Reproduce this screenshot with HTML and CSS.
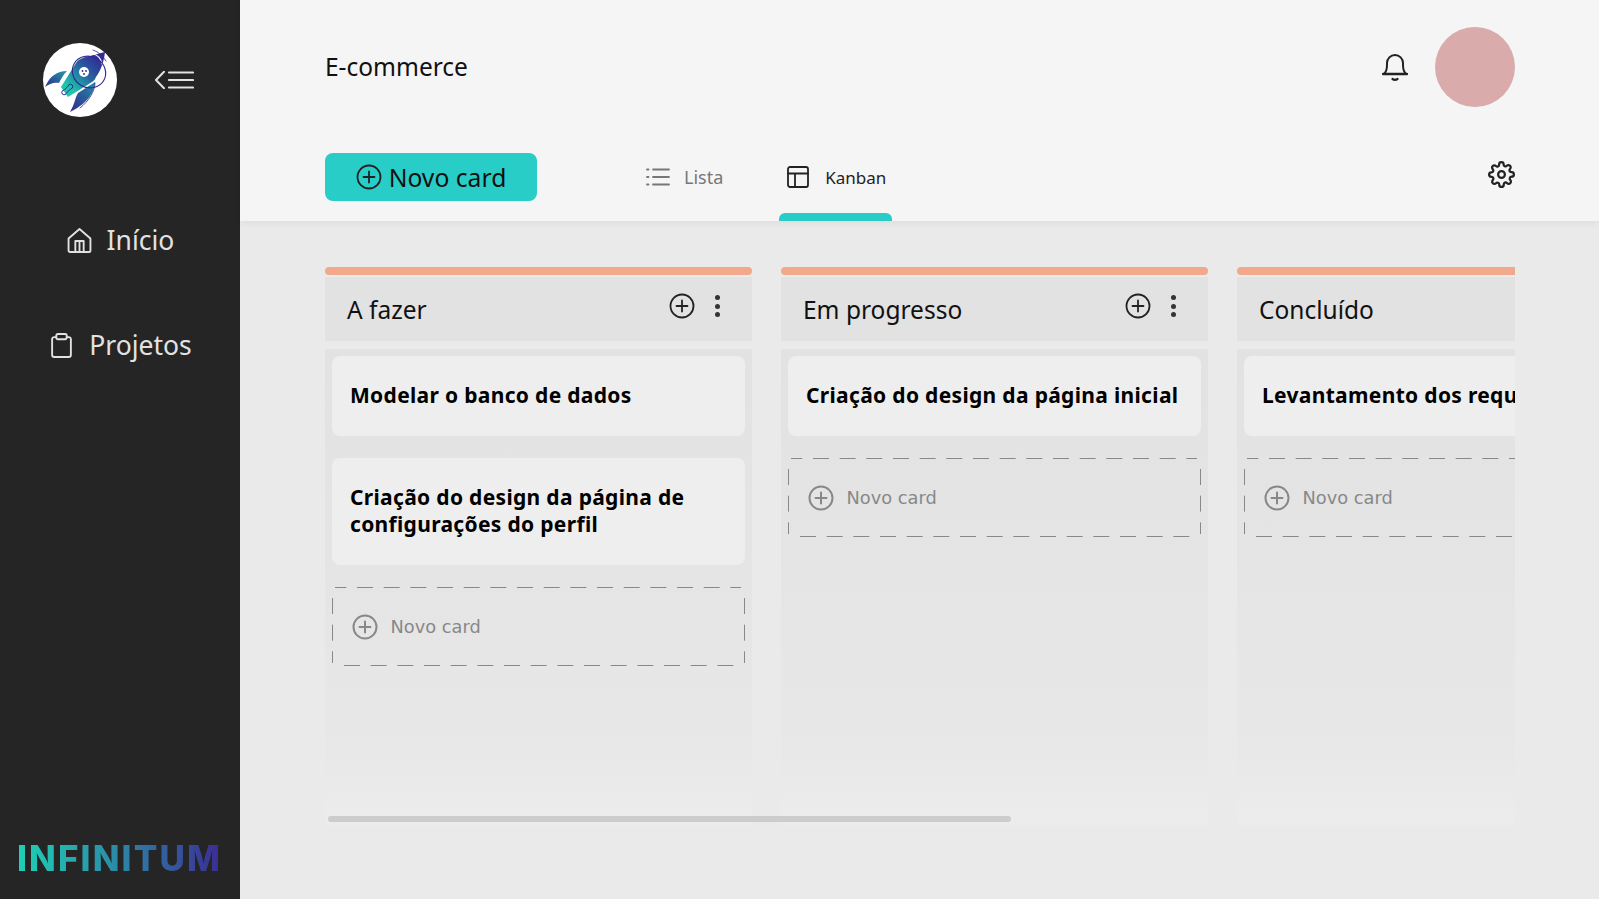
FILE: index.html
```html
<!DOCTYPE html>
<html lang="pt-BR">
    <head>
        <title>E-commerce</title>
        <meta name="viewport" content="width=device-width, initial-scale=1.0">
        <link rel="stylesheet" href="styles.css">
    </head>
    <body>
        <aside class="sidebar">
            <div class="brand">
                <svg class="logo" viewBox="0 0 74 74">
                    <defs>
                        <linearGradient id="rocket" x1="0" y1="1" x2="1" y2="0">
                            <stop offset=".2" stop-color="#1fc4ae"/>
                            <stop offset=".55" stop-color="#27639f"/>
                            <stop offset=".8" stop-color="#2f3596"/>
                            <stop offset="1" stop-color="#35268f"/>
                        </linearGradient>
                        <linearGradient id="fin-left" x1="0" y1="1" x2="1" y2="0">
                            <stop offset="0" stop-color="#35268f"/>
                            <stop offset="1" stop-color="#1f9fa8"/>
                        </linearGradient>
                        <linearGradient id="fin-bottom" x1="0" y1="1" x2="1" y2="0">
                            <stop offset="0" stop-color="#35268f"/>
                            <stop offset="1" stop-color="#1e8fa6"/>
                        </linearGradient>
                    </defs>
                    <circle cx="37" cy="37" r="37" fill="#fff"/>
                    <path d="M2 44C7 33 14 28 24 28C20 32 18 36 16 40C11 39 6 41 2 44Z" fill="url(#fin-left)"/>
                    <path d="M27 69L30 63C32 58 33 53 35 50L52 39C52 47 46 60 27 69Z" fill="url(#fin-bottom)"/>
                    <path d="M18 44L33 20C36 16 41 14 47 13C53 11 58 10 62 9C61 18 58 27 53 34C52 36 51 38 49 39L25 54Z" fill="url(#rocket)"/>
                    <path d="M50 11C55 12 58 16 59 21" stroke="#fff" stroke-width="1.200"/>
                    <path d="M50 7C56 9 60 13 63 18" stroke="#35258f" stroke-width=".8"/>
                    <ellipse cx="46" cy="29" rx="17" ry="15.500" transform="rotate(30 46 29)" stroke="#35258f" stroke-width="1.100"/>
                    <path d="M52 40C52 48 46 58 37 65" stroke="#35258f" stroke-width=".8"/>
                    <circle cx="41" cy="29" r="5" fill="#fff"/>
                    <circle cx="39.500" cy="28" r=".9" fill="#35258f"/>
                    <circle cx="43" cy="28" r=".9" fill="#35258f"/>
                    <circle cx="41" cy="31" r=".9" fill="#35258f"/>
                    <path d="M25 43a2.400 2.400 0 1 1 2.500 3l-4 4a2.400 2.400 0 1 1-2.500-3Z" stroke="#35258f" stroke-width="1"/>
                </svg>
                <svg class="menu-icon" viewBox="0 0 40 18" stroke="#e2e2e2">
                    <path d="M10 .8L2 9l8 8.200" stroke-width="2"/>
                    <path d="M15 1.500h24M15 9h24M15 16.500h24" stroke-width="2.200"/>
                </svg>
            </div>
            <nav class="nav">
                <a class="nav-item">
                    <svg class="nav-icon" viewBox="0 0 24 24">
                        <path d="M1.500 10L12 1l10.500 9v11.500a1.500 1.500 0 0 1-1.500 1.500H3a1.500 1.500 0 0 1-1.500-1.500Z"/>
                        <path d="M8 23V12.500h8V23M12 12.500V23"/>
                    </svg>
                    Início
                </a>
                <a class="nav-item">
                    <svg class="nav-icon" viewBox="0 0 24 24">
                        <path d="M7 4H5a2 2 0 0 0-2 2v15a2 2 0 0 0 2 2h14a2 2 0 0 0 2-2V6a2 2 0 0 0-2-2h-2"/>
                        <rect x="7" y="1" width="10" height="5" rx="1.500"/>
                    </svg>
                    Projetos
                </a>
            </nav>
            <div class="wordmark">INFINITUM</div>
        </aside>

        <main class="main">
            <header class="header">
                <div class="header-top">
                    <h1 class="project-title">E-commerce</h1>
                    <div class="header-user">
                        <svg class="bell" viewBox="0 0 26 28">
                            <path d="M2 21c2-2 3-4 3-9V10a8 8 0 0 1 16 0v2c0 5 1 7 3 9Z"/>
                            <path d="M1 21h24" stroke-width="2.400"/>
                            <path d="M10.500 26c1.500 1 3.500 1 5 0" stroke-width="2.200"/>
                        </svg>
                        <div class="avatar"></div>
                    </div>
                </div>
                <div class="header-bar">
                    <button class="new-card">
                        <svg class="plus-icon" viewBox="0 0 26 26">
                            <circle cx="13" cy="13" r="11.500"/>
                            <path d="M13 7.500v11M7.500 13h11"/>
                        </svg>
                        Novo card
                    </button>
                    <div class="tabs">
                        <a class="tab">
                            <svg class="tab-icon" viewBox="0 0 24 24">
                                <path d="M7 4.500h16M7 12h16M7 19.500h16"/>
                                <path d="M1 4.500h1.500M1 12h1.500M1 19.500h1.500"/>
                            </svg>
                            Lista
                        </a>
                        <a class="tab tab-active">
                            <svg class="tab-icon" viewBox="0 0 24 24">
                                <rect x="2" y="2" width="20" height="20" rx="2"/>
                                <path d="M2 8.500h20M9 8.500V22"/>
                            </svg>
                            Kanban
                        </a>
                    </div>
                    <svg class="gear" viewBox="0 0 24 24">
                        <circle cx="12" cy="12" r="3"/>
                        <path d="M19.400 15a1.650 1.650 0 0 0 .33 1.820l.06.06a2 2 0 1 1-2.830 2.830l-.06-.06a1.650 1.650 0 0 0-2.900 1.170V21a2 2 0 1 1-4 0v-.09a1.650 1.650 0 0 0-2.800-1.170l-.06.06a2 2 0 1 1-2.830-2.830l.06-.06a1.650 1.650 0 0 0-1.170-2.800H3a2 2 0 1 1 0-4h.09a1.650 1.650 0 0 0 1.170-2.800l-.06-.06a2 2 0 1 1 2.830-2.830l.06.06a1.650 1.650 0 0 0 2.800-1.170V3a2 2 0 1 1 4 0v.09a1.650 1.650 0 0 0 2.800 1.170l.06-.06a2 2 0 1 1 2.830 2.830l-.06.06a1.650 1.650 0 0 0 1.170 2.800H21a2 2 0 1 1 0 4h-.09a1.650 1.650 0 0 0-1.510 1.110Z"/>
                    </svg>
                </div>
            </header>

            <div class="board">
                <section class="column">
                    <div class="column-accent"></div>
                    <div class="column-head">
                        <h2 class="column-title">A fazer</h2>
                        <svg class="head-plus" viewBox="0 0 26 26">
                            <circle cx="13" cy="13" r="11.500"/>
                            <path d="M13 7.500v11M7.500 13h11"/>
                        </svg>
                        <span class="dots"><i></i><i></i><i></i></span>
                    </div>
                    <div class="column-body">
                        <article class="card">Modelar o banco de dados</article>
                        <article class="card">Criação do design da página de configurações do perfil</article>
                        <button class="add-card">
                            <svg class="add-icon" viewBox="0 0 26 26">
                                <circle cx="13" cy="13" r="11.500"/>
                                <path d="M13 7.500v11M7.500 13h11"/>
                            </svg>
                            Novo card
                        </button>
                    </div>
                </section>
                <section class="column">
                    <div class="column-accent"></div>
                    <div class="column-head">
                        <h2 class="column-title">Em progresso</h2>
                        <svg class="head-plus" viewBox="0 0 26 26">
                            <circle cx="13" cy="13" r="11.500"/>
                            <path d="M13 7.500v11M7.500 13h11"/>
                        </svg>
                        <span class="dots"><i></i><i></i><i></i></span>
                    </div>
                    <div class="column-body">
                        <article class="card">Criação do design da página inicial</article>
                        <button class="add-card">
                            <svg class="add-icon" viewBox="0 0 26 26">
                                <circle cx="13" cy="13" r="11.500"/>
                                <path d="M13 7.500v11M7.500 13h11"/>
                            </svg>
                            Novo card
                        </button>
                    </div>
                </section>
                <section class="column">
                    <div class="column-accent"></div>
                    <div class="column-head">
                        <h2 class="column-title">Concluído</h2>
                    </div>
                    <div class="column-body">
                        <article class="card card-nowrap">Levantamento dos requisitos</article>
                        <button class="add-card">
                            <svg class="add-icon" viewBox="0 0 26 26">
                                <circle cx="13" cy="13" r="11.500"/>
                                <path d="M13 7.500v11M7.500 13h11"/>
                            </svg>
                            Novo card
                        </button>
                    </div>
                </section>
                <div class="scroll-thumb"></div>
            </div>
        </main>
    </body>
</html>
```

FILE: styles.css
```css
* {
    box-sizing: border-box;
    margin: 0;
}

html, body {
    height: 100%;
}

body {
    display: flex;
    overflow: hidden;
    background: #eaeaea;
    color: #111;
    font-family: "Noto Sans", sans-serif;
}

svg {
    flex: none;
    fill: none;
    stroke-linecap: round;
    stroke-linejoin: round;
}

/* sidebar */
.sidebar {
    display: flex;
    flex: none;
    flex-direction: column;
    width: 240px;
    height: 899px;
    padding: 43px 0 23px;
    background: #252525;
}

.brand {
    display: flex;
    align-items: center;
    gap: 37px;
    padding-left: 43px;
}

.logo {
    width: 74px;
    height: 74px;
}

.menu-icon {
    width: 40px;
    height: 18px;
}

.nav {
    display: flex;
    flex: 1;
    flex-direction: column;
    align-items: center;
    gap: 68px;
    padding: 105px 0 0 1px;
}

.nav-item {
    display: flex;
    align-items: center;
    gap: 15px;
    color: #e2e2e2;
    font-size: 26.500px;
    line-height: 37px;
}

.nav-icon {
    width: 25px;
    height: 25px;
    stroke: #e2e2e2;
    stroke-width: 1.800;
}

.wordmark {
    padding-left: 17px;
    background: linear-gradient(90deg, #1fd1b5 17px, #2b8fa8 110px, #3a2f94 218px);
    -webkit-background-clip: text;
    background-clip: text;
    color: transparent;
    font-family: Inter, sans-serif;
    font-size: 35px;
    font-weight: 800;
    letter-spacing: 2.100px;
    line-height: 36px;
}

/* header */
.main {
    display: flex;
    flex: 1;
    flex-direction: column;
    min-width: 0;
}

.header {
    height: 221px;
    padding: 27px 84px 0 85px;
    background: #f5f5f5;
    box-shadow: 0 2px 8px rgba(0, 0, 0, .06);
}

.header-top {
    display: flex;
    align-items: center;
    justify-content: space-between;
    height: 80px;
}

.project-title {
    margin-top: -2px;
    font-size: 24.500px;
    font-weight: 400;
}

.header-user {
    display: flex;
    align-items: center;
    gap: 27px;
}

.bell {
    width: 26px;
    height: 28px;
    stroke: #222;
    stroke-width: 2;
}

.avatar {
    width: 80px;
    height: 80px;
    border-radius: 50%;
    background: #d9abab;
}

.header-bar {
    display: flex;
    align-items: flex-start;
    margin-top: 46px;
}

.new-card {
    display: flex;
    align-items: center;
    justify-content: center;
    gap: 7px;
    width: 212px;
    height: 48px;
    border: none;
    border-radius: 8px;
    background: #29cdc7;
    color: #111;
    font: 400 24.700px "Noto Sans", sans-serif;
}

.plus-icon {
    width: 26px;
    height: 26px;
    stroke: #222;
    stroke-width: 1.800;
}

.tabs {
    display: flex;
    flex: 1;
    gap: 50px;
    padding-left: 101px;
}

.tab {
    display: flex;
    align-items: flex-start;
    gap: 14px;
    position: relative;
    height: 68px;
    padding: 12px 6px 0 8px;
    color: #777;
    font-size: 18px;
    line-height: 24px;
}

.tab-active {
    gap: 15px;
    padding-left: 7px;
    color: #222;
    font-size: 17px;
    line-height: 25px;
}

.tab-active::after {
    content: "";
    position: absolute;
    right: 0;
    bottom: 0;
    left: 0;
    height: 8px;
    border-radius: 6px 6px 0 0;
    background: #29cdc7;
}

.tab-icon {
    width: 24px;
    height: 24px;
    stroke: currentColor;
    stroke-width: 1.800;
}

.gear {
    width: 27px;
    height: 27px;
    margin-top: 8px;
    stroke: #222;
    stroke-width: 2;
}

/* board */
.board {
    display: flex;
    flex: none;
    gap: 29px;
    position: relative;
    height: 558px;
    margin: 46px 84px 0 85px;
    overflow: hidden;
}

.column {
    display: flex;
    flex: none;
    flex-direction: column;
    width: 427px;
}

.column-accent {
    flex: none;
    height: 8px;
    border-radius: 4px;
    background: #f2a98b;
}

.column-head {
    display: flex;
    flex: none;
    align-items: flex-start;
    height: 64px;
    margin-top: 2px;
    padding: 16px 21px 0 22px;
    background: #e2e2e2;
}

.column-title {
    flex: 1;
    font-size: 24.500px;
    font-weight: 400;
    line-height: 34px;
}

.head-plus {
    width: 26px;
    height: 26px;
    stroke: #222;
    stroke-width: 1.800;
}

.dots {
    display: flex;
    flex-direction: column;
    gap: 3.500px;
    width: 5px;
    margin: 2px 11px 0 20px;
}

.dots i {
    width: 5px;
    height: 5px;
    border-radius: 50%;
    background: #333;
}

.column-body {
    display: flex;
    flex: 1;
    flex-direction: column;
    gap: 22px;
    margin-top: 8px;
    padding: 7px;
    background: linear-gradient(#e2e2e2, #e5e5e5 50%, #e8e8e8 85%, #ececec);
}

.card {
    display: flex;
    align-items: center;
    flex: none;
    min-height: 80px;
    padding: 26px 18px 27px;
    border-radius: 8px;
    background: #eee;
    color: #000;
    font-size: 21px;
    font-weight: 700;
    letter-spacing: .32px;
    line-height: 27px;
}

.card-nowrap {
    width: 413px;
    white-space: nowrap;
}

.add-card {
    display: flex;
    align-items: center;
    flex: none;
    gap: 12.500px;
    width: 413px;
    height: 79px;
    padding: 0 20px;
    border: none;
    background: url("data:image/svg+xml,%3Csvg xmlns='http://www.w3.org/2000/svg' width='413' height='79' fill='none' stroke='%23888' stroke-dasharray='16 10.67'%3E%3Cpath stroke-dashoffset='4.67' d='M3 .5H409'/%3E%3Cpath d='M412.500 11V76M.5 11V76M12 78.500H402'/%3E%3C/svg%3E") no-repeat;
    color: #888;
    font: 400 17.800px "DejaVu Sans", sans-serif;
}

.add-icon {
    width: 26px;
    height: 26px;
    stroke: #888;
    stroke-width: 2;
}

.scroll-thumb {
    position: absolute;
    bottom: 3px;
    left: 3px;
    width: 683px;
    height: 6px;
    border-radius: 3px;
    background: #ccc;
}
```
